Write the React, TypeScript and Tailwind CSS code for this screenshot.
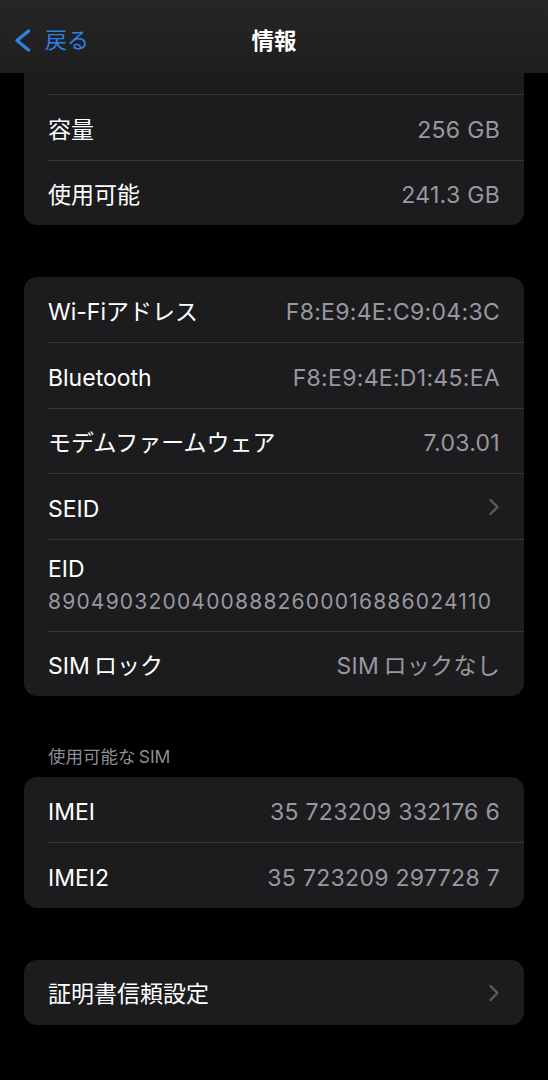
import React from 'react';

type Row = {
  label: string;
  value?: string;
  chevron?: boolean;
  stacked?: boolean;
};

const font = { fontFamily: 'Inter, "Noto Sans CJK JP", sans-serif' };

const spaced = (s?: string) =>
  s?.replace(/SIM(?=[\u3040-\u30ff])/g, 'SIM\u2009').replace(/(?<=[\u3040-\u30ff])SIM/g, '\u2009SIM');

const Chevron = ({ className }: { className?: string }) => (
  <svg viewBox="0 0 12 18" className={className} fill="none">
    <path d="M2.5 2l7 7-7 7" stroke="currentColor" strokeWidth="2.4" strokeLinecap="round" strokeLinejoin="round" />
  </svg>
);

const BackChevron = () => (
  <svg viewBox="0 0 19 23" className="w-[19px] h-[23px]" fill="none">
    <path d="M15.5 2L4 11.5 15.5 21" stroke="currentColor" strokeWidth="3.4" strokeLinecap="round" strokeLinejoin="round" />
  </svg>
);

const RowItem = ({ row, first }: { row: Row; first: boolean }) => {
  const border = first ? '' : 'border-t border-[#38383a]';
  if (row.stacked) {
    return (
      <div className={`ml-6 pr-6 h-[92px] pt-[14px] flex flex-col ${border}`}>
        <span className="text-[23px] leading-[31px] text-white">{row.label}</span>
        <span className="text-[21px] leading-[33px] tracking-[1.2px] text-[#98989e]">{row.value}</span>
      </div>
    );
  }
  return (
    <div className={`ml-6 pr-6 pt-[5px] flex items-center justify-between ${first ? 'h-[65px]' : 'h-[65.5px]'} ${border}`}>
      <span className="text-[23px] text-white">{spaced(row.label)}</span>
      {row.chevron ? (
        <Chevron className="w-[12px] h-[18px] -mt-[3px] text-[#5b5b5f]" />
      ) : (
        <span className="text-[23px] tracking-[0.3px] text-[#98989e]">{spaced(row.value)}</span>
      )}
    </div>
  );
};

const Card = ({ rows }: { rows: Row[] }) => (
  <div className="mx-6 rounded-[13px] bg-[#1c1c1e] overflow-hidden">
    {rows.map((r, i) => (
      <RowItem key={r.label} row={r} first={i === 0} />
    ))}
  </div>
);

const storageRows: Row[] = [
  { label: '容量', value: '256 GB' },
  { label: '使用可能', value: '241.3 GB' },
];

const networkRows: Row[] = [
  { label: 'Wi-Fiアドレス', value: 'F8:E9:4E:C9:04:3C' },
  { label: 'Bluetooth', value: 'F8:E9:4E:D1:45:EA' },
  { label: 'モデムファームウェア', value: '7.03.01' },
  { label: 'SEID', chevron: true },
  { label: 'EID', value: '89049032004008882600016886024110', stacked: true },
  { label: 'SIMロック', value: 'SIMロックなし' },
];

const simRows: Row[] = [
  { label: 'IMEI', value: '35 723209 332176 6' },
  { label: 'IMEI2', value: '35 723209 297728 7' },
];

export default function App() {
  return (
    <div className="w-[548px] h-[1080px] bg-black overflow-hidden" style={font}>
      {/* Nav bar */}
      <div className="h-[73px] pt-[8px] bg-gradient-to-b from-[#262626] to-[#1e1e1e] grid grid-cols-3 items-center">
        <div className="flex items-center pl-[13px] gap-[13px] text-[#2f80e4]">
          <BackChevron />
          <span className="text-[22px]">戻る</span>
        </div>
        <div className="text-center text-[22.5px] font-bold text-white">情報</div>
        <div />
      </div>

      {/* Storage card, top is scrolled under the bar */}
      <div className="mx-6 rounded-b-[13px] bg-[#1c1c1e] overflow-hidden">
        <div className="h-[21px]" />
        {storageRows.map((r) => (
          <RowItem key={r.label} row={r} first={false} />
        ))}
      </div>

      <div className="h-[52px]" />
      <Card rows={networkRows} />

      <div className="pl-12 pt-[50px] pb-[9px] text-[17.5px] leading-[22px] text-[#8d8d92]">{spaced('使用可能なSIM')}</div>
      <Card rows={simRows} />

      <div className="h-[52px]" />
      <Card rows={[{ label: '証明書信頼設定', chevron: true }]} />
    </div>
  );
}
